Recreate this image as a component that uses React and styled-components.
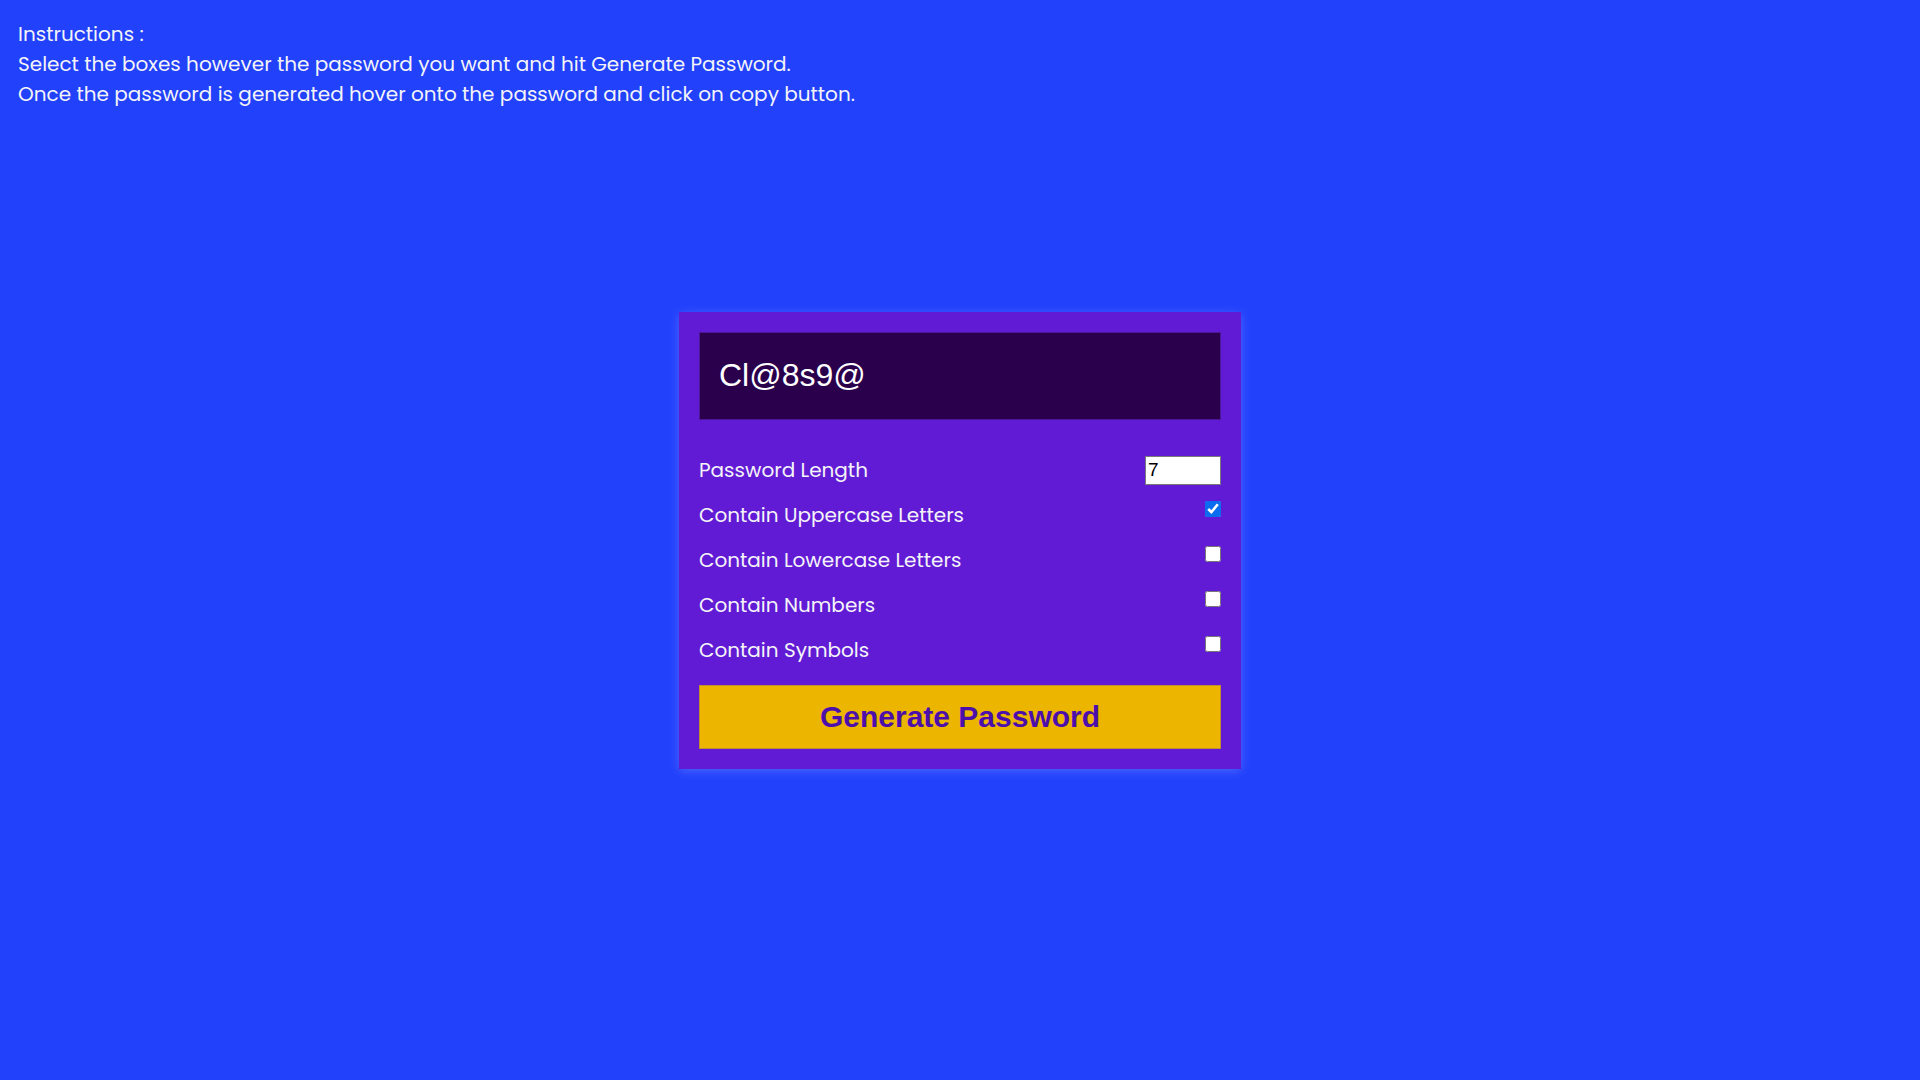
import React, { useState } from 'react'
import styled, { createGlobalStyle } from 'styled-components'

const GlobalStyle = createGlobalStyle`
  html, body {
    margin: 0;
    padding: 0;
    background: #2141fb;
  }
  * {
    box-sizing: border-box;
  }
`

const Page = styled.div`
  min-height: 100vh;
  display: grid;
  grid-template-rows: 1fr auto 1fr;
  font-family: Poppins, "DejaVu Sans", sans-serif;
  color: #f4f4f8;
`

const Instructions = styled.div`
  align-self: start;
  padding: 19px 18px 0;
  font-size: 20px;
  line-height: 30px;
`

const Card = styled.div`
  justify-self: center;
  width: 562px;
  padding: 20px;
  background: #621bd4;
  box-shadow: 0 2px 10px rgba(255, 255, 255, 0.2);
  display: flex;
  flex-direction: column;
`

const Result = styled.div`
  height: 88px;
  display: flex;
  align-items: center;
  padding: 0 19px;
  background: #2a004d;
  border: 1px solid #4a1796;
  color: #fff;
  font-family: "Liberation Sans", Arial, sans-serif;
  font-size: 32px;
`

const Options = styled.div`
  margin-top: 36px;
  display: flex;
  flex-direction: column;
  gap: 16px;
`

const Row = styled.div`
  display: flex;
  justify-content: space-between;
  align-items: ${props => (props.center ? 'center' : 'flex-start')};
  min-height: 29px;
`

const Label = styled.label`
  font-size: 20px;
  line-height: 29px;
`

const LengthInput = styled.input`
  width: 76px;
  height: 29px;
  margin: 0;
  padding: 0 2px;
  border: 1px solid #7a7a7a;
  background: #fff;
  color: #000;
  font-family: "Liberation Sans", Arial, sans-serif;
  font-size: 19px;
`

const Check = styled.input`
  width: 16px;
  height: 16px;
  margin: 0;
  accent-color: #0b6cf0;
`

const GenerateButton = styled.button`
  margin-top: 20px;
  height: 64px;
  width: 100%;
  background: #ecb500;
  border: 1px solid #c1902c;
  color: #4c0fab;
  font-family: "Liberation Sans", Arial, sans-serif;
  font-weight: bold;
  font-size: 30px;
  cursor: pointer;
`

const options = [
  { key: 'upper', label: 'Contain Uppercase Letters' },
  { key: 'lower', label: 'Contain Lowercase Letters' },
  { key: 'numbers', label: 'Contain Numbers' },
  { key: 'symbols', label: 'Contain Symbols' }
]

const App = () => {
  const [length, setLength] = useState('7')
  const [checked, setChecked] = useState({ upper: true, lower: false, numbers: false, symbols: false })

  return (
    <>
      <GlobalStyle />
      <Page>
        <Instructions>
          Instructions :
          <br />
          Select the boxes however the password you want and hit Generate Password.
          <br />
          Once the password is generated hover onto the password and click on copy button.
        </Instructions>
        <Card>
          <Result>Cl@8s9@</Result>
          <Options>
            <Row center>
              <Label htmlFor="length">Password Length</Label>
              <LengthInput id="length" type="text" value={length} onChange={e => setLength(e.target.value)} />
            </Row>
            {options.map(o => (
              <Row key={o.key}>
                <Label htmlFor={o.key}>{o.label}</Label>
                <Check
                  id={o.key}
                  type="checkbox"
                  checked={checked[o.key]}
                  onChange={() => setChecked({ ...checked, [o.key]: !checked[o.key] })}
                />
              </Row>
            ))}
          </Options>
          <GenerateButton>Generate Password</GenerateButton>
        </Card>
      </Page>
    </>
  )
}

export default App
